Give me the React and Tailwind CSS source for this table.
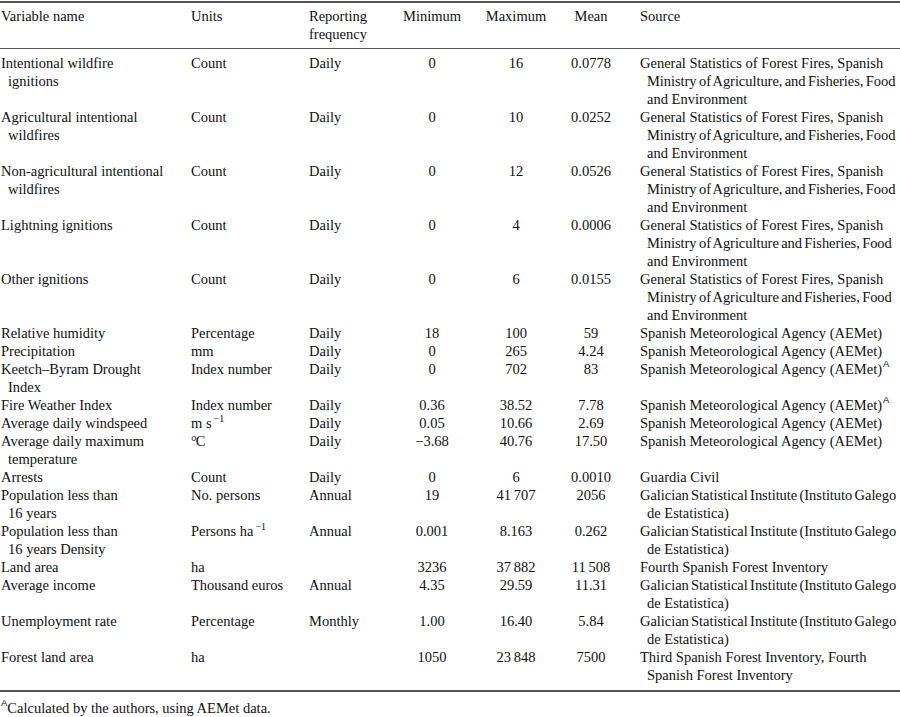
import React from "react";

const T = (s) => ({ tight: true, s });
const FIRE1 = [
  "General Statistics of Forest Fires, Spanish",
  T("Ministry of Agriculture, and Fisheries, Food"),
  "and Environment",
];
const FIRE2 = [
  "General Statistics of Forest Fires, Spanish",
  T("Ministry of Agriculture and Fisheries, Food"),
  "and Environment",
];
const SupA = () => (
  <sup className="text-[9.5px] font-['Liberation_Sans',Arial,sans-serif] top-[-0.7em] ml-px">A</sup>
);
const Neg1 = () => <sup className="text-[10px] top-[-0.6em] ml-[2px]">−1</sup>;
const AEM = ["Spanish Meteorological Agency (AEMet)"];
const AEMA = [
  <>
    Spanish Meteorological Agency (AEMet)
    <SupA />
  </>,
];
const GAL = [T("Galician Statistical Institute (Instituto Galego"), "de Estatistica)"];

const rows = [
  [["Intentional wildfire", "ignitions"], "Count", "Daily", "0", "16", "0.0778", FIRE1],
  [["Agricultural intentional", "wildfires"], "Count", "Daily", "0", "10", "0.0252", FIRE1],
  [["Non-agricultural intentional", "wildfires"], "Count", "Daily", "0", "12", "0.0526", FIRE1],
  [["Lightning ignitions"], "Count", "Daily", "0", "4", "0.0006", FIRE2],
  [["Other ignitions"], "Count", "Daily", "0", "6", "0.0155", FIRE2],
  [["Relative humidity"], "Percentage", "Daily", "18", "100", "59", AEM],
  [["Precipitation"], "mm", "Daily", "0", "265", "4.24", AEM],
  [["Keetch–Byram Drought", "Index"], "Index number", "Daily", "0", "702", "83", AEMA],
  [["Fire Weather Index"], "Index number", "Daily", "0.36", "38.52", "7.78", AEMA],
  [
    ["Average daily windspeed"],
    <>
      m s<Neg1 />
    </>,
    "Daily",
    "0.05",
    "10.66",
    "2.69",
    AEM,
  ],
  [["Average daily maximum", "temperature"], <span className="tracking-[-1px]">°C</span>, "Daily", "−3.68", "40.76", "17.50", AEM],
  [["Arrests"], "Count", "Daily", "0", "6", "0.0010", ["Guardia Civil"]],
  [["Population less than", "16 years"], "No. persons", "Annual", "19", "41\u2009707", "2056", GAL],
  [
    ["Population less than", "16 years Density"],
    <>
      Persons ha<Neg1 />
    </>,
    "Annual",
    "0.001",
    "8.163",
    "0.262",
    GAL,
  ],
  [["Land area"], "ha", "", "3236", "37\u2009882", "11\u2009508", ["Fourth Spanish Forest Inventory"]],
  [["Average income"], "Thousand euros", "Annual", "4.35", "29.59", "11.31", GAL],
  [["Unemployment rate"], "Percentage", "Monthly", "1.00", "16.40", "5.84", GAL],
  [
    ["Forest land area"],
    "ha",
    "",
    "1050",
    "23\u2009848",
    "7500",
    ["Third Spanish Forest Inventory, Fourth", "Spanish Forest Inventory"],
  ],
];

function Lines({ lines }) {
  return (
    <div>
      {lines.map((l, i) => {
        const tight = l && typeof l === "object" && l.tight;
        const content = tight ? l.s : l;
        let cls = "whitespace-nowrap";
        if (i > 0) cls += " pl-[7px]";
        if (tight) cls += " tracking-[-0.05px] [word-spacing:-1.2px]";
        return (
          <div key={i} className={cls}>
            {content}
          </div>
        );
      })}
    </div>
  );
}

const GRID = "grid grid-cols-[191px_118px_83px_80px_88px_62px_1fr]";

export default function App() {
  return (
    <div className="w-[900px] h-[717px] overflow-hidden bg-white text-[#111] font-['Liberation_Serif','Times_New_Roman',serif] text-[14.5px] leading-[18px]">
      <div className="h-px" />
      <div className="h-[1.5px] bg-[#555]" />
      <div className={GRID + " pt-[4px]"}>
        <div className="pl-px">Variable name</div>
        <div>Units</div>
        <div>
          <div>Reporting</div>
          <div>frequency</div>
        </div>
        <div className="text-center">Minimum</div>
        <div className="text-center">Maximum</div>
        <div className="text-center">Mean</div>
        <div className="pl-[18px]">Source</div>
      </div>
      <div className="h-[1.5px] bg-[#555] mt-[5px]" />
      <div className="pt-[5px]">
        {rows.map((r, i) => (
          <div key={i} className={GRID}>
            <div className="pl-px">
              <Lines lines={r[0]} />
            </div>
            <div className="whitespace-nowrap">{r[1]}</div>
            <div>{r[2]}</div>
            <div className="text-center">{r[3]}</div>
            <div className="text-center">{r[4]}</div>
            <div className="text-center">{r[5]}</div>
            <div className="pl-[18px]">
              <Lines lines={r[6]} />
            </div>
          </div>
        ))}
      </div>
      <div className="h-[1.5px] bg-[#555] mt-[6px]" />
      <div className="pt-[7px] pl-px">
        <sup className="text-[9.5px] font-['Liberation_Sans',Arial,sans-serif] top-[-0.7em]">A</sup>
        Calculated by the authors, using AEMet data.
      </div>
    </div>
  );
}
